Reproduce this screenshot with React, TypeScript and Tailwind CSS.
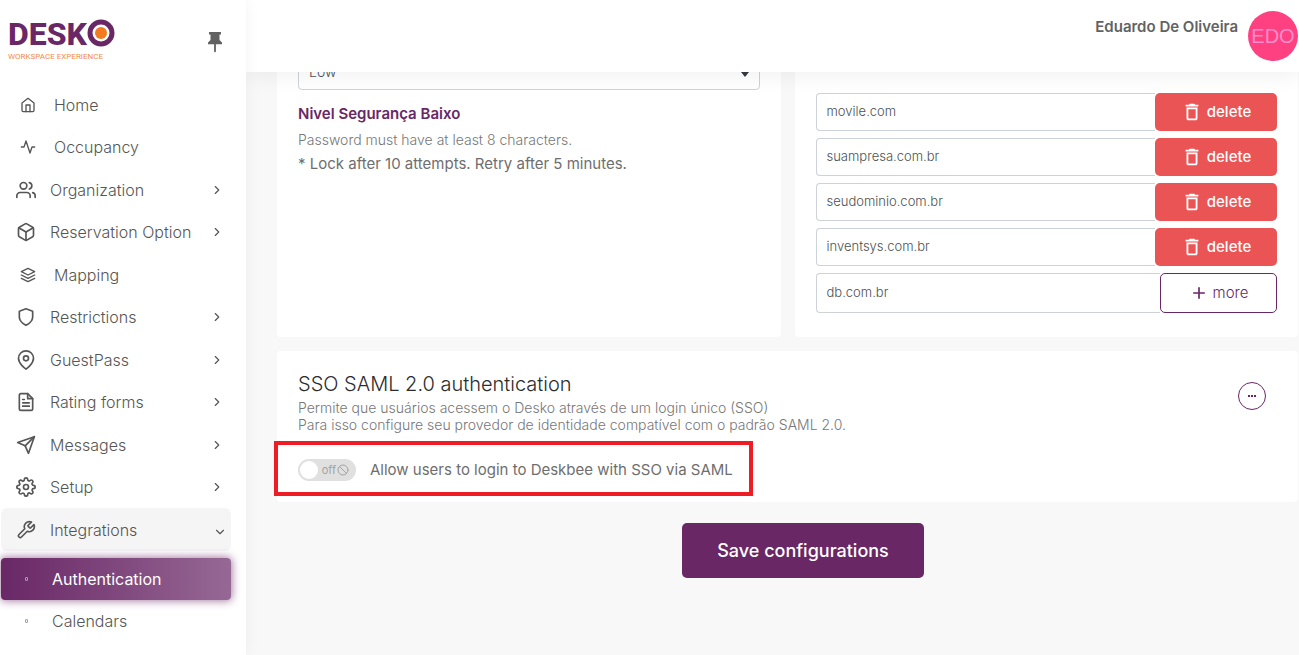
import type { IconType } from "react-icons";
import {
  FiActivity,
  FiBox,
  FiChevronDown,
  FiChevronRight,
  FiFileText,
  FiHome,
  FiLayers,
  FiMapPin,
  FiSend,
  FiSettings,
  FiShield,
  FiSlash,
  FiTool,
  FiUsers,
} from "react-icons/fi";
import { MdAdd, MdDeleteOutline } from "react-icons/md";

type NavItem = { label: string; icon: IconType; group?: boolean };

const navItems: NavItem[] = [
  { label: "Home", icon: FiHome },
  { label: "Occupancy", icon: FiActivity },
  { label: "Organization", icon: FiUsers, group: true },
  { label: "Reservation Option", icon: FiBox, group: true },
  { label: "Mapping", icon: FiLayers },
  { label: "Restrictions", icon: FiShield, group: true },
  { label: "GuestPass", icon: FiMapPin, group: true },
  { label: "Rating forms", icon: FiFileText, group: true },
  { label: "Messages", icon: FiSend, group: true },
  { label: "Setup", icon: FiSettings, group: true },
];

const domains = ["movile.com", "suampresa.com.br", "seudominio.com.br", "inventsys.com.br"];

function Logo() {
  return (
    <a href="#" className="flex flex-col gap-1 font-[Roboto,sans-serif]">
      <span className="flex h-7 items-center">
        <span className="text-[32px] leading-7 font-extrabold text-[#692766]">DESK</span>
        <svg viewBox="0 0 28 28" className="mb-0.5 size-7">
          <circle cx="14" cy="14" r="11" fill="none" stroke="#692766" strokeWidth="5" />
          <circle cx="14" cy="14" r="6" fill="#f47a20" />
        </svg>
      </span>
      <span className="text-[8px] leading-[10px] whitespace-nowrap text-[#f58b48]">WORKSPACE EXPERIENCE</span>
    </a>
  );
}

function NavRow({ label, icon: Icon, group }: NavItem) {
  return (
    <li className="h-[42px] odd:h-[43px]">
      <a href="#" className={group ? "flex h-full items-center pr-[7px] pl-4" : "flex h-full items-center pl-5"}>
        <Icon className={group ? "size-5 shrink-0" : "size-4 shrink-0"} />
        <span className={group ? "ml-3.5 grow whitespace-nowrap" : "ml-[18px] grow"}>{label}</span>
        {group && <FiChevronRight className="size-3.5 shrink-0" />}
      </a>
    </li>
  );
}

function Sidebar() {
  return (
    <aside className="z-20 flex w-[246px] shrink-0 flex-col bg-white shadow-[0_0_15px_rgba(0,0,0,0.05)]">
      <div className="flex h-[83px] items-start justify-between pt-5 pr-[19px] pl-2">
        <Logo />
        <button type="button" aria-label="Pin menu" className="mt-2.5">
          <svg viewBox="0 0 24 24" className="size-6" fill="#626262">
            <path d="M6 2H18V4.400H16.500V10L19 12.500V14.200H12.900V21.500L12 22.500L11.100 21.500V14.200H5V12.500L7.500 10V4.400H6Z" />
          </svg>
        </button>
      </div>
      <nav className="pr-[15px] text-[16px] text-[#565656]">
        <ul className="font-light">
          {navItems.map((item) => (
            <NavRow key={item.label} {...item} />
          ))}
          <li>
            <a href="#" className="ml-px flex h-[43px] items-center rounded-md bg-[#f5f5f5] pr-1 pl-[15px]">
              <FiTool className="size-5 shrink-0" />
              <span className="ml-3.5 grow">Integrations</span>
              <FiChevronDown className="mt-1 size-3.5 shrink-0" />
            </a>
            <ul className="pt-[7px] pl-px">
              <li>
                <a
                  href="#"
                  className="flex h-[42px] items-center rounded bg-linear-to-r/srgb from-[#692766] to-[#966894] pl-6 font-normal text-white shadow-[0_0_8px_1px_rgba(105,39,102,0.6)]"
                >
                  <span className="h-1 w-[3px] rounded-[1px] border border-[#b995b8]" />
                  <span className="ml-6">Authentication</span>
                </a>
              </li>
              <li>
                <a href="#" className="flex h-[42px] items-center pl-6">
                  <span className="h-1 w-[3px] rounded-[1px] border border-[#a0a0a0]" />
                  <span className="ml-6">Calendars</span>
                </a>
              </li>
            </ul>
          </li>
        </ul>
      </nav>
    </aside>
  );
}

function Header() {
  return (
    <header className="z-10 flex h-[72px] shrink-0 justify-end gap-2.5 bg-white pt-[11px] pr-px shadow-[0_4px_20px_rgba(0,0,0,0.06)]">
      <span className="mt-1.5 text-[15px] leading-5 font-semibold text-[#626262]">Eduardo De Oliveira</span>
      <span className="flex size-[50px] items-center justify-center rounded-full bg-[#ff4081] font-['Liberation_Sans',sans-serif] text-[20px] text-[#ff8ccc]">
        EDO
      </span>
    </header>
  );
}

function SecurityCard() {
  return (
    <section className="rounded-sm bg-white px-[21px] pt-5">
      <div className="relative">
        <select
          aria-label="Security level"
          className="h-[38px] w-full appearance-none rounded border border-[#cdd1d8] bg-white px-2.5 text-[14px] font-light text-[#4e5154]"
        >
          <option>Low</option>
        </select>
        <svg viewBox="0 0 8 5" className="pointer-events-none absolute top-5 right-[11px] h-[5px] w-2" fill="#343a40">
          <path d="M0 0h8L4 5z" />
        </svg>
      </div>
      <h2 className="mt-3.5 text-[15px] leading-5 font-semibold text-[#692766]">Nivel Segurança Baixo</h2>
      <p className="mt-1.5 text-[14px] leading-5 font-light text-[#777]">Password must have at least 8 characters.</p>
      <p className="mt-1 text-[15px] leading-5 text-[#6e6e6e]">* Lock after 10 attempts. Retry after 5 minutes.</p>
    </section>
  );
}

function DomainsCard() {
  const field =
    "w-full min-w-0 grow rounded-l border border-r-0 border-[#cdd1d8] bg-white px-2.5 text-[13px] font-light text-[#4e5154]";
  return (
    <section className="rounded-sm bg-white px-[21px] pt-[61px] pb-6">
      <ul className="flex flex-col gap-[7px]">
        {domains.map((domain) => (
          <li key={domain} className="flex h-[38px]">
            <input aria-label="Allowed domain" defaultValue={domain} className={field} />
            <button
              type="button"
              className="flex w-[122px] shrink-0 items-center justify-center gap-1 rounded-[5px] bg-[#ea5455] text-[15px] font-medium text-white"
            >
              <MdDeleteOutline className="size-[22px]" />
              delete
            </button>
          </li>
        ))}
        <li className="flex h-10">
          <input aria-label="New domain" defaultValue="db.com.br" className={field} />
          <button
            type="button"
            className="flex w-[117px] shrink-0 items-center justify-center gap-1 rounded-[5px] border border-[#692766] text-[15px] font-light text-[#692766]"
          >
            <MdAdd className="size-5" />
            more
          </button>
        </li>
      </ul>
    </section>
  );
}

function SsoCard() {
  return (
    <section className="mt-3.5 flex items-start justify-between rounded-sm bg-white px-[21px] pt-[21px] pb-[21px]">
      <div>
        <h2 className="text-[20px] leading-6 font-light text-[#2c2c2c]">SSO SAML 2.0 authentication</h2>
        <p className="mt-[3px] text-[14px] leading-[17px] font-light text-[#777]">
          Permite que usuários acessem o Desko através de um login único (SSO)
          <br />
          Para isso configure seu provedor de identidade compatível com o padrão SAML 2.0.
        </p>
        <div className="relative mt-[26px] w-max">
          <label className="flex items-center gap-3.5 text-[15px] leading-[22px] text-[#6e6e6e]">
            <span className="relative flex h-[22px] w-[58px] items-center justify-end gap-px rounded-full bg-[#e0e0e0] pr-[7px] text-[11px] text-[#a3a3a3]">
              <input type="checkbox" role="switch" className="absolute inset-0 size-full appearance-none" />
              <span className="absolute top-0.5 left-0.5 size-[18px] rounded-full bg-white" />
              off
              <FiSlash className="size-3" />
            </span>
            Allow users to login to Deskbee with SSO via SAML
          </label>
          <div className="pointer-events-none absolute -top-[18px] -right-5 -bottom-[15px] -left-6 border-4 border-[#ee1c25]" />
        </div>
      </div>
      <button
        type="button"
        aria-label="Options"
        className="mt-2.5 mr-[11px] flex size-7 items-center justify-center gap-px rounded-full border border-[#692766]"
      >
        <span className="size-0.5 bg-[#692766]" />
        <span className="size-0.5 bg-[#692766]" />
        <span className="size-0.5 bg-[#692766]" />
      </button>
    </section>
  );
}

export default function App() {
  return (
    <div className="flex h-screen overflow-hidden bg-[#f8f8f8] font-[Inter,sans-serif]">
      <Sidebar />
      <div className="flex min-w-0 grow flex-col">
        <Header />
        <main className="min-h-0 grow overflow-hidden">
          <div className="-mt-10 pr-px pl-[31px]">
            <div className="grid grid-cols-2 gap-3.5">
              <SecurityCard />
              <DomainsCard />
            </div>
            <SsoCard />
            <div className="mt-[21px] flex justify-center pl-[31px]">
              <button
                type="button"
                className="h-[55px] rounded-[5px] bg-[#692766] px-[35px] text-[18px] font-medium text-white"
              >
                Save configurations
              </button>
            </div>
          </div>
        </main>
      </div>
    </div>
  );
}
